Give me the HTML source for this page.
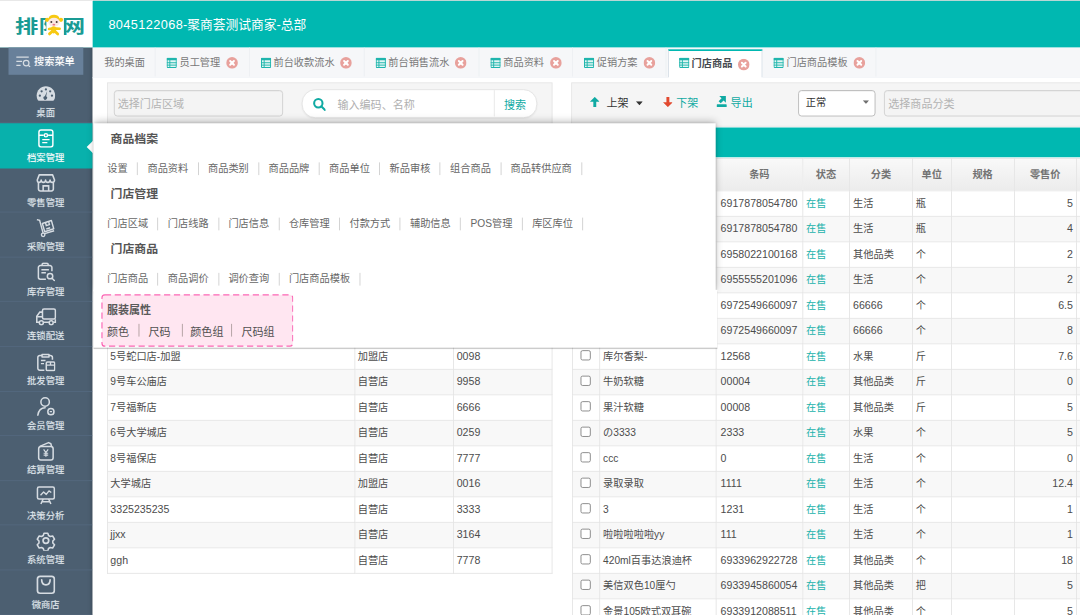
<!DOCTYPE html>
<html lang="zh-CN"><head><meta charset="utf-8"><title>排队网 - 门店商品</title>
<style>
*{box-sizing:border-box;margin:0;padding:0}
html,body{width:1080px;height:615px;overflow:hidden;background:#fff}
body{font-family:"Liberation Sans","Noto Sans CJK SC",sans-serif;font-size:12px;color:#444}
#wrap{position:absolute;left:0;top:0;width:1271px;height:724px;transform:scale(.85);transform-origin:0 0;overflow:hidden;background:#fff}
#hdr{position:absolute;left:0;top:0;width:1271px;height:56.300px;background:#00b8b1;border-top:1px solid #d8dcdc}
#logo{position:absolute;left:0;top:0;width:109px;height:56.300px;background:#fff;border-top:1px solid #e4e4e4}
#title{position:absolute;left:127.500px;top:0;height:56px;line-height:57px;color:#fff;font-size:15px;white-space:nowrap}
#title b{font-weight:normal;letter-spacing:.45px}
#side{position:absolute;left:0;top:56px;width:109.400px;height:668px;background:#4c5f71;box-shadow:inset -4px 0 4px -2px rgba(0,0,0,.18)}
#sm{position:absolute;left:10px;top:0;width:88px;height:31.500px;background:#68809a;color:#fff;font-size:12px;line-height:34px;white-space:nowrap}
#sm svg{position:absolute;left:9px;top:10px}
#sm span{position:absolute;left:30px;top:0;text-shadow:0 0 1px rgba(255,255,255,.6)}
.si{position:absolute;left:0;width:109px;height:52.590px;border-bottom:1px solid #54697f;text-align:center;color:#dfe5ea}
.si.on{background:#08b1ac;color:#fff;border-bottom-color:#08b1ac}
.si svg{position:absolute;left:53.700px;top:17.500px;transform:translate(-50%,-50%)}
.si span{position:absolute;left:0;width:107.500px;top:32px;line-height:16px;font-size:11px;text-shadow:0 0 1px rgba(223,229,234,.55)}
#tabs{position:absolute;left:109px;top:56px;width:1162px;height:35.600px;background:#f6f7f9;border-bottom:1.500px solid #d3dde7}
.tab{position:absolute;top:0;height:34px;line-height:37px;font-size:12px;color:#787878;border-right:1px solid #eceff2;white-space:nowrap}
.tab .ti{position:absolute;top:11.800px}
.tab .tc{position:absolute;top:11.400px}
.tab span{position:absolute;top:0}
.tab.on{background:#fff;top:1.600px;border-top:2.200px solid #00b8b1;border-right:1px solid #d5dde6;border-left:1px solid #d5dde6;height:35.500px;color:#454a50;font-weight:bold;line-height:31px}
.tab.on .ti{top:8.300px}
.tab.on .tc{top:9px}
#main{position:absolute;left:109px;top:91px;width:1162px;height:633px;background:#fff}
.pane{position:absolute;background:#f5f5f5;border:1px solid #e6e6e6}
.inp{position:absolute;height:31px;border:1px solid #cdcdcd;border-radius:4px;background:#f4f4f4;color:#b3b3b3;font-size:13px;line-height:32.500px;padding-left:4px;white-space:nowrap;box-shadow:inset 0 1px 1px rgba(0,0,0,.04)}
.tbl{position:absolute;border-collapse:collapse;table-layout:fixed;font-size:12px;color:#4c4c4c}
.tbl td,.tbl th{border:1px solid #e3e3e3;height:30px;line-height:27.600px;padding:1.200px 4px 0 3.300px;white-space:nowrap;overflow:hidden;text-align:left;vertical-align:middle}
.tbl tr:nth-child(even) td{background:#f8f8f8}
.tbl tr:nth-child(odd) td{background:#fff}
.tbl.rt tr:nth-child(even) td{background:#fff}
.tbl.rt tr:nth-child(odd) td{background:#f8f8f8}
.tbl th{height:38px;background:linear-gradient(#f9f9f9,#ececec);color:#737373;font-weight:bold;text-align:center;padding-top:1.500px}
.tbl td.n{font-size:12.500px}
.tbl td.r{text-align:right;font-size:12.500px}
.tbl td.s{color:#22b2ab}
.cb{display:block;width:11.600px;height:11.800px;border:1.200px solid #7b7b7b;border-radius:2.300px;background:#fff;margin:-2.800px auto 0;position:relative;left:-.6px}
#pop{position:absolute;left:109.500px;top:144.700px;width:732.300px;height:264.500px}
#popA{position:absolute;left:0;top:0;width:732.300px;height:199px;background:#fff;box-shadow:0 -3px 9px rgba(0,0,0,.24),0 0 3.500px rgba(0,0,0,.22)}
#popB{position:absolute;left:0;top:196.400px;width:734px;height:67.800px;background:#fff;box-shadow:0 1.700px 0 rgba(0,0,0,.2)}
#pop h4{position:absolute;left:20.500px;font-size:14px;font-weight:bold;color:#555;line-height:20px;white-space:nowrap}
.lk{position:absolute;left:5.700px;white-space:nowrap;font-size:12px;color:#666;line-height:16px}
.lk a{display:inline-block;padding:0 11.100px;border-right:1px solid #ccc;height:15px;line-height:15px}
#pink{position:absolute;left:9.600px;top:201.400px;width:226.400px;height:61.800px}
#pink h5{position:absolute;left:6.700px;top:10.200px;font-size:13px;font-weight:bold;color:#5a5a5a;line-height:18px;white-space:nowrap}
#pink .pi{position:absolute;top:36.300px;font-size:13px;color:#505050;line-height:18px;white-space:nowrap}
#pink .ps{position:absolute;top:35.300px;width:1px;height:14.800px;background:#a99}
#arrow{position:absolute;left:101.500px;top:165.200px;width:0;height:0;border:8px solid transparent;border-right:8px solid #fff;border-left:0}
</style></head><body><div id="wrap">

<div id="hdr"></div>
<div id="logo"><svg width="109" height="56" viewBox="0 0 109 56" style="position:absolute;left:0;top:0">
<text x="17.800" y="37.500" font-family="'Liberation Sans','Noto Sans CJK SC',sans-serif" font-weight="700" font-size="21.500" fill="#1a9b94" textLength="82.500" lengthAdjust="spacingAndGlyphs">排队网</text>
<rect x="54.600" y="16" width="20.400" height="27" fill="#fff"/>
<g transform="translate(-.3 -1)"><g fill="#f7c912"><ellipse cx="63.800" cy="21.600" rx="6.300" ry="4.200"/><circle cx="55.800" cy="23.300" r="2.500"/><circle cx="72" cy="23.300" r="2.500"/></g>
<ellipse cx="63.800" cy="26" rx="6.700" ry="5.200" fill="#fbe9e4"/>
<circle cx="60.700" cy="25.800" r="1.150" fill="#4a3a3a"/><circle cx="67" cy="25.800" r="1.150" fill="#4a3a3a"/>
<ellipse cx="63.700" cy="29" rx="1.700" ry="1" fill="#e8788a"/>
<g stroke="#f7c912" stroke-linecap="round" fill="none"><path d="M58 34.200L63.300 33.400L70.500 33.800" stroke-width="3"/><path d="M63.400 33.800v2.800" stroke-width="5.600"/><path d="M62.300 36.500l-3.800 3.400M64.600 36.500l3.600 3.400" stroke-width="3.300"/></g></g>
</svg></div>
<div id="title"><b>8045122068</b>-聚商荟测试商家-总部</div>
<div id="side">
<div id="sm"><svg width="17.500" height="13" viewBox="0 0 20 15" fill="none" stroke="#d6dce2" stroke-width="1.700"><path d="M0 1.500h17M0 7h8M0 12.500h6"/><circle cx="13.500" cy="9.500" r="3.800"/><path d="M16.300 12.300l2.500 2.500"/></svg><span>搜索菜单</span></div>
<div class="si" style="top:36.47px"><svg width="23.5" height="18.5" viewBox="0 0 28 22"><path d="M14 1C6.8 1 1 6.8 1 14c0 2.4.6 4.6 1.8 6.5.3.4.7.5 1.1.5h20.2c.4 0 .8-.1 1.1-.5C26.400 18.600 27 16.400 27 14 27 6.800 21.200 1 14 1z" fill="#d6dce2"/><circle cx="5.500" cy="14" r="1.600" fill="#4c5f71"/><circle cx="8" cy="8" r="1.600" fill="#4c5f71"/><circle cx="14" cy="5.300" r="1.600" fill="#4c5f71"/><circle cx="22.500" cy="14" r="1.600" fill="#4c5f71"/><circle cx="20" cy="8" r="1.600" fill="#4c5f71"/><path d="M15.800 7.500l-1.400 7.500a2.500 2.500 0 1 1-1.800-.3z" fill="#4c5f71"/></svg><span>桌面</span></div>
<div class="si on" style="top:89.06px"><svg width="19" height="22.5" viewBox="0 0 22 26" fill="none" stroke="#fff" stroke-width="2"><rect x="1.500" y="1.500" width="19" height="23" rx="3"/><path d="M1.500 8.500h6.500M14 8.500h6.500" /><circle cx="11" cy="8.500" r="2.200"/><path d="M6 14.500h10M6 18.500h7" stroke-width="1.800"/></svg><span>档案管理</span></div>
<div class="si" style="top:141.65px"><svg width="24" height="24" viewBox="0 0 26 26" fill="none" stroke="#d6dce2" stroke-width="2"><path d="M4.500 3h17l2.500 6.500c0 1.800-1.300 3-2.900 3s-2.800-1.200-2.800-3c0 1.800-1.300 3-2.800 3s-2.900-1.200-2.900-3c0 1.800-1.300 3-2.800 3s-2.800-1.200-2.800-3c0 1.800-1.300 3-2.900 3S2 11.300 2 9.500z" stroke-linejoin="round"/><path d="M3.500 12.500V21a2.500 2.500 0 0 0 2.500 2.500h14a2.500 2.500 0 0 0 2.500-2.500v-8.500"/><path d="M9.500 23.500v-6.500h7v6.500"/></svg><span>零售管理</span></div>
<div class="si" style="top:194.24px"><svg width="24" height="24" viewBox="0 0 26 26" fill="none" stroke="#d6dce2" stroke-width="1.800"><path d="M1.500 2.500l3.500 1 4.500 16.500"/><path d="M11.500 20.500l12-3.800"/><circle cx="9.500" cy="22" r="2.200"/><path d="M8.500 7.500l11.500-3.800 3 10.500-11.500 3.800z" stroke-linejoin="round"/><path d="M12.500 6.500l1 3.700 4-1.300-1-3.700" /><path d="M13.500 14.500l5-1.600" /></svg><span>采购管理</span></div>
<div class="si" style="top:246.83px"><svg width="23" height="23" viewBox="0 0 26 26" fill="none" stroke="#d6dce2" stroke-width="2"><path d="M8 4.500V3a1.500 1.500 0 0 1 1.500-1.500h5A1.500 1.500 0 0 1 16 3v1.500"/><path d="M21 12V7a2.500 2.500 0 0 0-2.500-2.500h-13A2.500 2.500 0 0 0 3 7v13a2.500 2.500 0 0 0 2.500 2.500H13"/><path d="M7 10h10M7 14h6" stroke-width="1.800"/><circle cx="18.500" cy="18.500" r="3.600"/><path d="M21.200 21.200l3 3" stroke-linecap="round"/></svg><span>库存管理</span></div>
<div class="si" style="top:299.42px"><svg width="25" height="21.5" viewBox="0 0 28 24" fill="none" stroke="#d6dce2" stroke-width="2"><rect x="9.500" y="1.500" width="17" height="13" rx="2"/><path d="M9.500 5.500H6L2 11v8h3"/><path d="M2.500 11.500h7"/><path d="M11 19h7"/><path d="M24 19h2.500V15"/><circle cx="8" cy="19.500" r="2.600"/><circle cx="21" cy="19.500" r="2.600"/></svg><span>连锁配送</span></div>
<div class="si" style="top:352.01px"><svg width="23.5" height="23.5" viewBox="0 0 26 26" fill="none" stroke="#d6dce2" stroke-width="2"><path d="M8 4.500h-3A2.500 2.500 0 0 0 2.500 7v14A2.500 2.500 0 0 0 5 23.500h6"/><path d="M8 3h9v3.500H8z" stroke-linejoin="round"/><path d="M17 4.500h2A2.500 2.500 0 0 1 21.500 7v3"/><path d="M6.500 11h6M6.500 15h4" stroke-width="1.800"/><rect x="13.500" y="13" width="11" height="11" rx="1.500"/><path d="M13.500 17h11M19 13v4" stroke-width="1.800"/></svg><span>批发管理</span></div>
<div class="si" style="top:404.60px"><svg width="23.5" height="23.5" viewBox="0 0 26 26" fill="none" stroke="#d6dce2" stroke-width="2"><circle cx="12" cy="7.500" r="5.500"/><path d="M2.500 24.500C3.500 18 7 14.800 12 14.800" stroke-linecap="round"/><circle cx="19.500" cy="20" r="4"/><path d="M18 20h3" stroke-width="1.500"/></svg><span>会员管理</span></div>
<div class="si" style="top:457.19px"><svg width="21.5" height="23.5" viewBox="0 0 24 26" fill="none" stroke="#d6dce2" stroke-width="2"><path d="M4 6.500L15.500 1.500l3 1.500 1 3.500" stroke-linejoin="round"/><rect x="2.500" y="6.500" width="19" height="18" rx="3"/><path d="M9 10.500l3 4 3-4M12 14.500V20M9 15.500h6M9 18h6" stroke-width="1.600"/></svg><span>结算管理</span></div>
<div class="si" style="top:509.78px"><svg width="23.5" height="23.5" viewBox="0 0 26 26" fill="none" stroke="#d6dce2" stroke-width="2"><rect x="2" y="2" width="22" height="15.500" rx="2"/><path d="M6 12.500l4-4 3.500 3 3.500-4.500 3 2" stroke-width="1.800" stroke-linejoin="round"/><path d="M9.500 17.500l-3 6.500M16.500 17.500l3 6.500M7 21h12"/></svg><span>决策分析</span></div>
<div class="si" style="top:562.37px"><svg width="24" height="24" viewBox="0 0 26 26" fill="none" stroke="#d6dce2" stroke-width="2.200"><path d="M10.300 2.500h5.400l1 3.300 2.400 1.400 3.400-.8 2.700 4.700-2.400 2.500v2.800l2.400 2.500-2.700 4.700-3.400-.8-2.400 1.400-1 3.300h-5.400l-1-3.300-2.400-1.400-3.400.8-2.700-4.700 2.400-2.500v-2.800L.800 11.100l2.700-4.700 3.400.8 2.400-1.400z" stroke-linejoin="round" transform="translate(1.300 1.300) scale(.9)"/><circle cx="13" cy="13" r="3.600"/></svg><span>系统管理</span></div>
<div class="si" style="top:614.96px"><svg width="23.5" height="23.5" viewBox="0 0 26 26" fill="none" stroke="#d6dce2" stroke-width="2.200"><rect x="2" y="2" width="22" height="22" rx="3.500"/><path d="M7.500 6.500c0 4 2.200 6.500 5.500 6.500s5.500-2.500 5.500-6.500" stroke-linecap="round"/></svg><span>微商店</span></div>
</div>
<div id="tabs">
<div class="tab" style="left:0;width:73.94px"><span style="left:13.59px">我的桌面</span></div>
<div class="tab" style="left:73.94px;width:110.59px"><span style="left:28.20px">员工管理</span>
<svg class="ti" style="left:13.20px" width="12" height="12" viewBox="0 0 12 12"><rect x=".6" y=".6" width="10.800" height="10.800" rx=".8" fill="#e3f6f4" stroke="#1fb5ad" stroke-width="1.200"/><rect x="0" y="0" width="12" height="3" rx=".8" fill="#1fb5ad"/><path d="M3.800 2v10M0 5.800h12M0 8.600h12" stroke="#1fb5ad" stroke-width="1.100" fill="none"/></svg>
<svg class="tc" style="left:82.70px" width="14" height="14" viewBox="0 0 14 14"><circle cx="7" cy="7" r="6.800" fill="#e8a19c"/><path d="M4.800 4.800l4.400 4.400M9.200 4.800l-4.400 4.400" stroke="#fff" stroke-width="2.300" stroke-linecap="round"/></svg>
</div>
<div class="tab" style="left:184.53px;width:135.06px"><span style="left:28.20px">前台收款流水</span>
<svg class="ti" style="left:13.20px" width="12" height="12" viewBox="0 0 12 12"><rect x=".6" y=".6" width="10.800" height="10.800" rx=".8" fill="#e3f6f4" stroke="#1fb5ad" stroke-width="1.200"/><rect x="0" y="0" width="12" height="3" rx=".8" fill="#1fb5ad"/><path d="M3.800 2v10M0 5.800h12M0 8.600h12" stroke="#1fb5ad" stroke-width="1.100" fill="none"/></svg>
<svg class="tc" style="left:106.70px" width="14" height="14" viewBox="0 0 14 14"><circle cx="7" cy="7" r="6.800" fill="#e8a19c"/><path d="M4.800 4.800l4.400 4.400M9.200 4.800l-4.400 4.400" stroke="#fff" stroke-width="2.300" stroke-linecap="round"/></svg>
</div>
<div class="tab" style="left:319.59px;width:135.29px"><span style="left:28.20px">前台销售流水</span>
<svg class="ti" style="left:13.20px" width="12" height="12" viewBox="0 0 12 12"><rect x=".6" y=".6" width="10.800" height="10.800" rx=".8" fill="#e3f6f4" stroke="#1fb5ad" stroke-width="1.200"/><rect x="0" y="0" width="12" height="3" rx=".8" fill="#1fb5ad"/><path d="M3.800 2v10M0 5.800h12M0 8.600h12" stroke="#1fb5ad" stroke-width="1.100" fill="none"/></svg>
<svg class="tc" style="left:106.70px" width="14" height="14" viewBox="0 0 14 14"><circle cx="7" cy="7" r="6.800" fill="#e8a19c"/><path d="M4.800 4.800l4.400 4.400M9.200 4.800l-4.400 4.400" stroke="#fff" stroke-width="2.300" stroke-linecap="round"/></svg>
</div>
<div class="tab" style="left:454.88px;width:110.00px"><span style="left:28.20px">商品资料</span>
<svg class="ti" style="left:13.20px" width="12" height="12" viewBox="0 0 12 12"><rect x=".6" y=".6" width="10.800" height="10.800" rx=".8" fill="#e3f6f4" stroke="#1fb5ad" stroke-width="1.200"/><rect x="0" y="0" width="12" height="3" rx=".8" fill="#1fb5ad"/><path d="M3.800 2v10M0 5.800h12M0 8.600h12" stroke="#1fb5ad" stroke-width="1.100" fill="none"/></svg>
<svg class="tc" style="left:82.70px" width="14" height="14" viewBox="0 0 14 14"><circle cx="7" cy="7" r="6.800" fill="#e8a19c"/><path d="M4.800 4.800l4.400 4.400M9.200 4.800l-4.400 4.400" stroke="#fff" stroke-width="2.300" stroke-linecap="round"/></svg>
</div>
<div class="tab" style="left:564.88px;width:109.65px"><span style="left:28.20px">促销方案</span>
<svg class="ti" style="left:13.20px" width="12" height="12" viewBox="0 0 12 12"><rect x=".6" y=".6" width="10.800" height="10.800" rx=".8" fill="#e3f6f4" stroke="#1fb5ad" stroke-width="1.200"/><rect x="0" y="0" width="12" height="3" rx=".8" fill="#1fb5ad"/><path d="M3.800 2v10M0 5.800h12M0 8.600h12" stroke="#1fb5ad" stroke-width="1.100" fill="none"/></svg>
<svg class="tc" style="left:82.70px" width="14" height="14" viewBox="0 0 14 14"><circle cx="7" cy="7" r="6.800" fill="#e8a19c"/><path d="M4.800 4.800l4.400 4.400M9.200 4.800l-4.400 4.400" stroke="#fff" stroke-width="2.300" stroke-linecap="round"/></svg>
</div>
<div class="tab on" style="left:677.47px;width:110.59px"><span style="left:26.20px">门店商品</span>
<svg class="ti" style="left:11.20px" width="12" height="12" viewBox="0 0 12 12"><rect x=".6" y=".6" width="10.800" height="10.800" rx=".8" fill="#e3f6f4" stroke="#1fb5ad" stroke-width="1.200"/><rect x="0" y="0" width="12" height="3" rx=".8" fill="#1fb5ad"/><path d="M3.800 2v10M0 5.800h12M0 8.600h12" stroke="#1fb5ad" stroke-width="1.100" fill="none"/></svg>
<svg class="tc" style="left:80.70px" width="14" height="14" viewBox="0 0 14 14"><circle cx="7" cy="7" r="6.800" fill="#e8a19c"/><path d="M4.800 4.800l4.400 4.400M9.200 4.800l-4.400 4.400" stroke="#fff" stroke-width="2.300" stroke-linecap="round"/></svg>
</div>
<div class="tab" style="left:788.06px;width:133.53px"><span style="left:28.20px">门店商品模板</span>
<svg class="ti" style="left:13.20px" width="12" height="12" viewBox="0 0 12 12"><rect x=".6" y=".6" width="10.800" height="10.800" rx=".8" fill="#e3f6f4" stroke="#1fb5ad" stroke-width="1.200"/><rect x="0" y="0" width="12" height="3" rx=".8" fill="#1fb5ad"/><path d="M3.800 2v10M0 5.800h12M0 8.600h12" stroke="#1fb5ad" stroke-width="1.100" fill="none"/></svg>
<svg class="tc" style="left:106.70px" width="14" height="14" viewBox="0 0 14 14"><circle cx="7" cy="7" r="6.800" fill="#e8a19c"/><path d="M4.800 4.800l4.400 4.400M9.200 4.800l-4.400 4.400" stroke="#fff" stroke-width="2.300" stroke-linecap="round"/></svg>
</div>
</div>
<div id="main">
<div class="pane" style="left:16.500px;top:6.300px;width:524px;height:52px"></div>
<div class="inp" style="left:24.500px;top:15px;width:199px">选择门店区域</div>
<div style="position:absolute;left:246px;top:14.400px;width:277px;height:33.500px;border:1px solid #e2e2e2;border-radius:16px;background:#fff;box-shadow:0 1px 2px rgba(0,0,0,.06)">
<svg width="15.800" height="15.800" viewBox="0 0 17 17" style="position:absolute;left:11.500px;top:8.600px" fill="none" stroke="#10aaa3" stroke-width="2.600"><circle cx="7" cy="7" r="5.300"/><path d="M11 11l4.500 4.500" stroke-linecap="round"/></svg>
<span style="position:absolute;left:41px;top:0;line-height:35px;color:#b0b0b0;font-size:13px;white-space:nowrap">输入编码、名称</span>
<div style="position:absolute;left:225px;top:0;width:1px;height:31px;background:#e5e5e5"></div>
<span style="position:absolute;left:237px;top:0;line-height:35px;color:#10aaa3;font-size:13px;white-space:nowrap">搜索</span></div>
<div style="position:absolute;left:16.500px;top:58.600px;width:524px;height:35.900px;background:#00b8b1"></div>
<table class="tbl" style="left:16.500px;top:73.10px;width:523.700px"><colgroup><col style="width:291px"><col style="width:116.500px"><col style="width:116.200px"></colgroup>
<tr><td></td><td></td><td></td></tr>
<tr><td></td><td></td><td></td></tr>
<tr><td></td><td></td><td></td></tr>
<tr><td></td><td></td><td></td></tr>
<tr><td></td><td></td><td></td></tr>
<tr><td></td><td></td><td></td></tr>
<tr><td></td><td></td><td></td></tr>
<tr><td></td><td></td><td></td></tr>
<tr><td>5号蛇口店-加盟</td><td>加盟店</td><td class="n">0098</td></tr>
<tr><td>9号车公庙店</td><td>自营店</td><td class="n">9958</td></tr>
<tr><td>7号福新店</td><td>自营店</td><td class="n">6666</td></tr>
<tr><td>6号大学城店</td><td>自营店</td><td class="n">0259</td></tr>
<tr><td>8号福保店</td><td>自营店</td><td class="n">7777</td></tr>
<tr><td>大学城店</td><td>加盟店</td><td class="n">0016</td></tr>
<tr><td class="n">3325235235</td><td>自营店</td><td class="n">3333</td></tr>
<tr><td class="n">jjxx</td><td>自营店</td><td class="n">3164</td></tr>
<tr><td class="n">ggh</td><td>自营店</td><td class="n">7778</td></tr>
</table>
<div class="pane" style="left:563px;top:6.300px;width:641px;height:52px"></div>
<svg width="11.500" height="12" viewBox="0 0 12 14" preserveAspectRatio="none" style="position:absolute;left:584.500px;top:23.300px"><path d="M6 0l6 6.500H7.800V14H4.200V6.500H0z" fill="#10aaa3"/></svg>
<span style="position:absolute;left:604.500px;top:15px;line-height:32px;color:#333;font-size:13px;white-space:nowrap">上架</span>
<svg width="8.600" height="4.800" viewBox="0 0 10 6" preserveAspectRatio="none" style="position:absolute;left:638.500px;top:28px"><path d="M0 0h10L5 6z" fill="#333"/></svg>
<svg width="11.500" height="12" viewBox="0 0 12 14" preserveAspectRatio="none" style="position:absolute;left:670.500px;top:23px"><path d="M6 14l6-6.500H7.800V0H4.200V7.500H0z" fill="#e2492f"/></svg>
<span style="position:absolute;left:686.500px;top:15px;line-height:32px;color:#10aaa3;font-size:13px;white-space:nowrap">下架</span>
<svg width="12.200" height="13.300" viewBox="0 0 12 13" preserveAspectRatio="none" style="position:absolute;left:734.100px;top:21.700px" fill="#10aaa3"><path d="M.9 9.300h10.200a.9.9 0 0 1 .9.900v1.900a.9.900 0 0 1-.9.900H.9a.9.900 0 0 1-.9-.9v-1.900a.9.900 0 0 1 .9-.9z"/><path d="M3.200 0h7.600v7.600l-2.600-2.600-3.400 3.400-2.400-2.400 3.400-3.400z"/></svg>
<span style="position:absolute;left:750.500px;top:15px;line-height:32px;color:#10aaa3;font-size:13px;white-space:nowrap">导出</span>
<div style="position:absolute;left:830px;top:15px;width:91px;height:31px;border:1px solid #b5b5b5;border-radius:4px;background:#fff;box-shadow:inset 0 1px 1px rgba(0,0,0,.05)"><span style="position:absolute;left:8px;top:0;line-height:28px;font-size:12px;color:#333">正常</span><svg width="7.500" height="4.300" viewBox="0 0 9 5" preserveAspectRatio="none" style="position:absolute;left:74.500px;top:11px"><path d="M0 0h9L4.500 5z" fill="#707070"/></svg></div>
<div class="inp" style="left:931px;top:15px;width:300px">选择商品分类</div>

<div style="position:absolute;left:563px;top:58.600px;width:641px;height:35.900px;background:#00b8b1"></div>
<table class="tbl rt" style="left:563.500px;top:94.500px;width:668.82px"><colgroup><col style="width:32.71px"><col style="width:137.29px"><col style="width:101.53px"><col style="width:55.29px"><col style="width:73.88px"><col style="width:45.76px"><col style="width:73.88px"><col style="width:73.53px"><col style="width:74.94px"></colgroup>
<tr><th></th><th>商品名称</th><th>条码</th><th>状态</th><th>分类</th><th>单位</th><th>规格</th><th>零售价</th><th></th></tr>
<tr><td style="padding:0"><i class="cb"></i></td><td></td><td class="n" style="padding-left:4.300px">6917878054780</td><td class="s">在售</td><td>生活</td><td>瓶</td><td></td><td class="r">5</td><td></td></tr>
<tr><td style="padding:0"><i class="cb"></i></td><td></td><td class="n" style="padding-left:4.300px">6917878054780</td><td class="s">在售</td><td>生活</td><td>瓶</td><td></td><td class="r">4</td><td></td></tr>
<tr><td style="padding:0"><i class="cb"></i></td><td></td><td class="n" style="padding-left:4.300px">6958022100168</td><td class="s">在售</td><td>其他品类</td><td>个</td><td></td><td class="r">2</td><td></td></tr>
<tr><td style="padding:0"><i class="cb"></i></td><td></td><td class="n" style="padding-left:4.300px">6955555201096</td><td class="s">在售</td><td>生活</td><td>个</td><td></td><td class="r">2</td><td></td></tr>
<tr><td style="padding:0"><i class="cb"></i></td><td></td><td class="n" style="padding-left:4.300px">6972549660097</td><td class="s">在售</td><td class="n">66666</td><td>个</td><td></td><td class="r">6.5</td><td></td></tr>
<tr><td style="padding:0"><i class="cb"></i></td><td></td><td class="n" style="padding-left:4.300px">6972549660097</td><td class="s">在售</td><td class="n">66666</td><td>个</td><td></td><td class="r">8</td><td></td></tr>
<tr><td style="padding:0"><i class="cb"></i></td><td>库尔香梨-</td><td class="n" style="padding-left:4.300px">12568</td><td class="s">在售</td><td>水果</td><td>斤</td><td></td><td class="r">7.6</td><td></td></tr>
<tr><td style="padding:0"><i class="cb"></i></td><td>牛奶软糖</td><td class="n" style="padding-left:4.300px">00004</td><td class="s">在售</td><td>其他品类</td><td>斤</td><td></td><td class="r">0</td><td></td></tr>
<tr><td style="padding:0"><i class="cb"></i></td><td>果汁软糖</td><td class="n" style="padding-left:4.300px">00008</td><td class="s">在售</td><td>其他品类</td><td>斤</td><td></td><td class="r">5</td><td></td></tr>
<tr><td style="padding:0"><i class="cb"></i></td><td>の3333</td><td class="n" style="padding-left:4.300px">2333</td><td class="s">在售</td><td>水果</td><td>个</td><td></td><td class="r">5</td><td></td></tr>
<tr><td style="padding:0"><i class="cb"></i></td><td>ccc</td><td class="n" style="padding-left:4.300px">0</td><td class="s">在售</td><td>生活</td><td>个</td><td></td><td class="r">0</td><td></td></tr>
<tr><td style="padding:0"><i class="cb"></i></td><td>录取录取</td><td class="n" style="padding-left:4.300px">1111</td><td class="s">在售</td><td>生活</td><td>个</td><td></td><td class="r">12.4</td><td></td></tr>
<tr><td style="padding:0"><i class="cb"></i></td><td>3</td><td class="n" style="padding-left:4.300px">1231</td><td class="s">在售</td><td>生活</td><td>个</td><td></td><td class="r">1</td><td></td></tr>
<tr><td style="padding:0"><i class="cb"></i></td><td>啦啦啦啦啦yy</td><td class="n" style="padding-left:4.300px">111</td><td class="s">在售</td><td>生活</td><td>个</td><td></td><td class="r">1</td><td></td></tr>
<tr><td style="padding:0"><i class="cb"></i></td><td>420ml百事达浪迪杯</td><td class="n" style="padding-left:4.300px">6933962922728</td><td class="s">在售</td><td>其他品类</td><td>个</td><td></td><td class="r">18</td><td></td></tr>
<tr><td style="padding:0"><i class="cb"></i></td><td>美信双色10厘勺</td><td class="n" style="padding-left:4.300px">6933945860054</td><td class="s">在售</td><td>其他品类</td><td>把</td><td></td><td class="r">5</td><td></td></tr>
<tr><td style="padding:0"><i class="cb"></i></td><td>金景105欧式双耳碗</td><td class="n" style="padding-left:4.300px">6933912088511</td><td class="s">在售</td><td>其他品类</td><td>个</td><td></td><td class="r">5</td><td></td></tr>
</table>
</div>
<div id="arrow"></div>
<div id="pop"><div id="popA"></div><div id="popB"></div>
<h4 style="top:8px">商品档案</h4>
<div class="lk" style="top:45.00px"><a>设置</a><a>商品资料</a><a>商品类别</a><a>商品品牌</a><a>商品单位</a><a>新品审核</a><a>组合商品</a><a>商品转供应商</a></div>
<h4 style="top:73.500px">门店管理</h4>
<div class="lk" style="top:110.00px"><a>门店区域</a><a>门店线路</a><a>门店信息</a><a>仓库管理</a><a>付款方式</a><a>辅助信息</a><a>POS管理</a><a>库区库位</a></div>
<h4 style="top:138.500px">门店商品</h4>
<div class="lk" style="top:175.50px"><a>门店商品</a><a>商品调价</a><a>调价查询</a><a>门店商品模板</a></div>
<div id="pink"><svg width="226.400" height="63.400" style="position:absolute;left:0;top:0"><rect x=".9" y=".9" width="224.600" height="60.400" rx="3.500" fill="#ffe6f1" stroke="#fb66b4" stroke-width="1.500" stroke-dasharray="7.300 4.300"/></svg><h5>服装属性</h5><span class="pi" style="left:6.7px">颜色</span><span class="pi" style="left:55.6px">尺码</span><span class="pi" style="left:104.8px">颜色组</span><span class="pi" style="left:164.9px">尺码组</span><i class="ps" style="left:44.2px"></i><i class="ps" style="left:94.6px"></i><i class="ps" style="left:152.8px"></i></div>
</div>
</div></body></html>
